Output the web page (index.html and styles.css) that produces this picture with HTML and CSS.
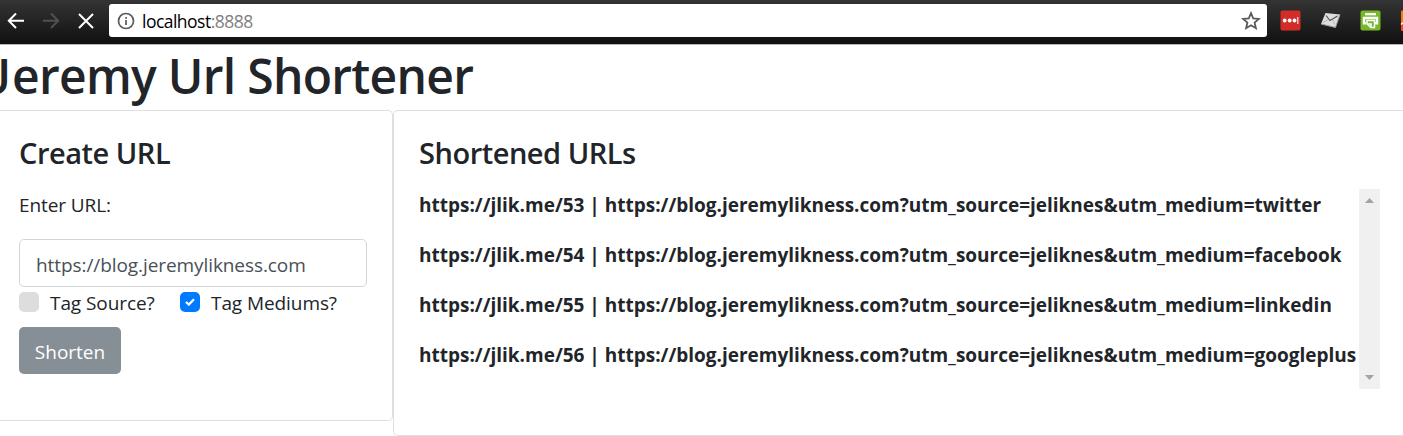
FILE: index.html
```
<!DOCTYPE html>
<html lang="en">
<head>
<meta charset="utf-8">
<title>Jeremy Url Shortener</title>
<link rel="stylesheet" href="styles.css">
</head>
<body>
<header class="toolbar">
  <svg class="nav" width="100" height="43" viewBox="0 0 100 43" fill="none" stroke="#fff" stroke-width="2">
    <path d="M24 20.800H9M16 13.500L8.800 20.800L16 28"/>
    <path d="M43 20.800H58M51 13.500L58.200 20.800L51 28" stroke="#505050"/>
    <path d="M79 14L93 28M93 14L79 28"/>
  </svg>
  <div class="address">
    <svg class="info" width="18" height="18" viewBox="0 0 18 18"><circle cx="9" cy="9" r="7.500" fill="none" stroke="#5a5a5a" stroke-width="1.700"/><path d="M9 8v5M9 5v1.800" stroke="#5a5a5a" stroke-width="1.700"/></svg>
    <span class="host">localhost<span class="port">:8888</span></span>
    <svg class="star" width="20" height="20" viewBox="0 0 20 20"><path d="M10 2.200L12.200 7.400L17.900 7.900L13.600 11.600L14.900 17.200L10 14.200L5.100 17.200L6.400 11.600L2.100 7.900L7.800 7.400Z" fill="none" stroke="#5a5a5a" stroke-width="1.800"/></svg>
  </div>
  <svg class="extensions" width="123" height="43" viewBox="0 0 123 43">
    <rect x="0.500" y="10.500" width="20" height="20" rx="2" fill="#d32d27"/>
    <g fill="#fff"><circle cx="4.700" cy="20.500" r="1.900"/><circle cx="9.700" cy="20.500" r="1.900"/><circle cx="14.500" cy="20.500" r="1.900"/><rect x="17.300" y="17" width="1" height="7"/></g>
    <path d="M45.500 13L60 14.500L55.500 27.500L41 24Z" fill="#dedede"/>
    <path d="M41 24L55.500 27.500L60 14.500" fill="none" stroke="#999" stroke-width="1"/>
    <path d="M46 15.500L50 20.500L57.500 16" fill="none" stroke="#555" stroke-width="1.200"/>
    <path d="M43 22.500L48 19.500M54.500 24.500L53 20" fill="none" stroke="#aaa" stroke-width="0.800"/>
    <rect x="80.500" y="10.500" width="20" height="20" rx="2" fill="#76b82a"/>
    <path d="M85 14.200H96" fill="none" stroke="#fff" stroke-width="2.200"/>
    <path d="M86 23.200H84V18H97V23.200H95" fill="none" stroke="#fff" stroke-width="2.400"/>
    <path d="M87 20.500H94.500V27.500H91L87 24Z" fill="#76b82a" stroke="#fff" stroke-width="1.500"/>
    <path d="M87 24H91V27.500" fill="none" stroke="#fff" stroke-width="1.500"/>
    <path d="M123 10.500H122Q121 10.500 121 12V29.500Q121 31 123 31Z" fill="#f57c00"/>
    <path d="M121 25L123 22V31Q121 31 121 29Z" fill="#ef4e23"/>
    <path d="M121 24.500L123 22.500" stroke="#fff" stroke-width="1.300"/>
  </svg>
</header>
<h1 class="title"><span class="initial">J</span><span>eremy Url Shortener</span></h1>
<main class="cards">
  <section class="card create">
    <h2 class="heading">Create URL</h2>
    <p class="label">Enter URL:</p>
    <div class="field"><div class="value">https://blog.jeremylikness.com</div></div>
    <div class="options">
      <label class="option"><span class="box"></span><span>Tag Source?</span></label>
      <label class="option"><span class="box checked"><svg width="10" height="8" viewBox="0 0 10 8"><path d="M1 4L3.800 6.600L9 1.200" fill="none" stroke="#fff" stroke-width="2.200"/></svg></span><span>Tag Mediums?</span></label>
    </div>
    <button class="submit">Shorten</button>
  </section>
  <section class="card results">
    <h2 class="heading">Shortened URLs</h2>
    <div class="list">
      <div class="rows">
        <p class="row">https://jlik.me/53 | https://blog.jeremylikness.com?utm_source=jeliknes&amp;utm_medium=twitter</p>
        <p class="row">https://jlik.me/54 | https://blog.jeremylikness.com?utm_source=jeliknes&amp;utm_medium=facebook</p>
        <p class="row">https://jlik.me/55 | https://blog.jeremylikness.com?utm_source=jeliknes&amp;utm_medium=linkedin</p>
        <p class="row">https://jlik.me/56 | https://blog.jeremylikness.com?utm_source=jeliknes&amp;utm_medium=googleplus</p>
      </div>
      <div class="scrollbar">
        <svg width="9" height="5" viewBox="0 0 9 5"><path d="M0 5L4.500 0L9 5Z" fill="#a3a3a3"/></svg>
        <svg width="9" height="5" viewBox="0 0 9 5"><path d="M0 0L4.500 5L9 0Z" fill="#a3a3a3"/></svg>
      </div>
    </div>
  </section>
</main>
</body>
</html>
```
FILE: styles.css
```
* { box-sizing: border-box; }
body { margin: 0; height: 436px; overflow: hidden; background: #fff; color: #212529; font: 19px/30px "Open Sans", "Noto Sans", sans-serif; }
h1, h2, p { margin: 0; white-space: nowrap; }
.toolbar { display: flex; height: 45px; background: linear-gradient(#343434, #111 43px); border-bottom: 1px solid #b5b5b5; }
.nav { flex: none; margin-right: 9px; }
.address { display: flex; align-items: center; width: 1158px; height: 33px; margin-top: 4px; padding: 0 6px 0 8px; background: #fff; border-radius: 3px; color: #000; font-size: 17.500px; }
.host { flex: 1; margin-left: 7px; letter-spacing: -0.520px; }
.port { color: #808080; }
.extensions { flex: none; margin-left: 13px; }
.title { display: flex; height: 65px; font-size: 48px; line-height: 62px; font-weight: 600; letter-spacing: -0.700px; white-space: pre; }
.initial { display: flex; justify-content: flex-end; width: 13px; font-family: Lato, sans-serif; margin-right: -1px; padding-right: 3px; }
.cards { display: flex; align-items: flex-start; }
.card { border: 1px solid #dfdfdf; border-radius: 5px; }
.create { width: 393px; height: 311px; padding: 25px 25px 0 19px; border-left: 0; border-radius: 0 5px 5px 0; }
.results { width: 1010px; height: 326px; padding: 25px 23px 0 25px; border-right: 0; border-radius: 5px 0 0 5px; }
.heading { height: 53px; font-size: 29px; line-height: 34px; font-weight: 600; letter-spacing: -0.480px; }
.label { height: 50px; line-height: 32px; letter-spacing: -0.100px; }
.field { height: 48px; padding: 9px 16px; border: 1px solid #d3d6d9; border-radius: 5px; color: #495057; letter-spacing: -0.080px; }
.value { height: 27px; overflow: hidden; line-height: 32px; white-space: nowrap; }
.options { display: flex; height: 40px; letter-spacing: -0.080px; }
.option { display: flex; width: 161px; white-space: nowrap; gap: 11px; line-height: 32px; }
.box { display: flex; align-items: center; justify-content: center; flex: none; width: 20px; height: 20px; margin-top: 5px; border-radius: 5px; background: #ddd; }
.checked { background: #007bff; }
.submit { display: block; width: 102px; height: 47px; padding: 2px 0 0; border: 0; border-radius: 5px; background: #868e96; color: #fff; font: inherit; }
.list { display: flex; height: 200px; }
.rows { width: 940px; }
.row { height: 50px; line-height: 32px; font-weight: 700; letter-spacing: -0.010px; }
.scrollbar { display: flex; flex-direction: column; justify-content: space-between; align-items: center; width: 21px; padding: 9px 0; background: #f0f0f0; }
```
